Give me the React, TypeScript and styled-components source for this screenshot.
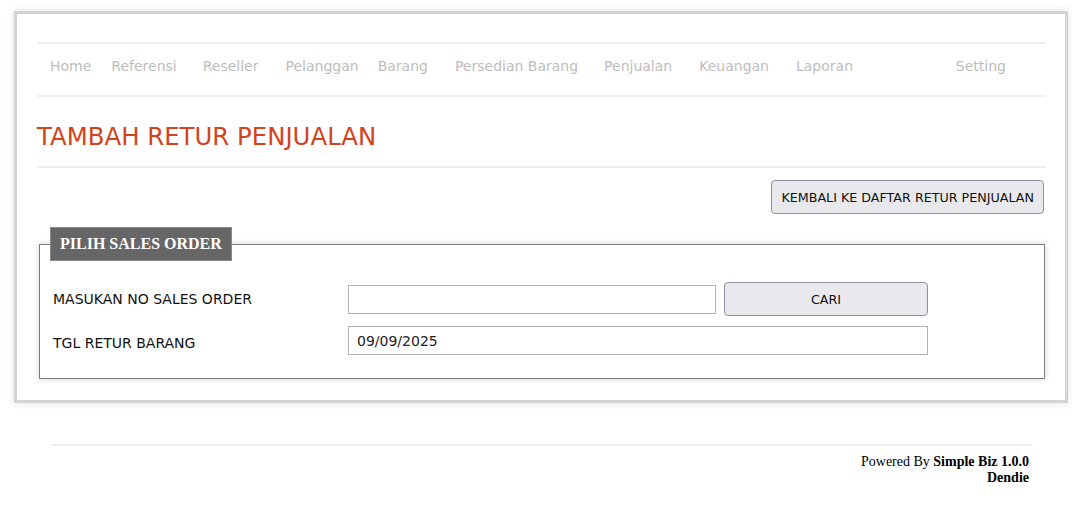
import React from "react";
import styled, { createGlobalStyle } from "styled-components";

const GlobalStyle = createGlobalStyle`
  html, body {
    margin: 0;
    padding: 0;
    background: #fff;
  }
  body {
    font-family: "DejaVu Sans", Verdana, sans-serif;
  }
`;

const Page = styled.div`
  padding: 11px 0 0 14px;
`;

const Card = styled.div`
  width: 1054px;
  box-sizing: border-box;
  border: 3px solid #d3d3d3;
  box-shadow: 0 0 8px rgba(0, 0, 0, 0.12);
  background: #fff;
  padding: 28px 19px 21px 20px;
`;

const Nav = styled.nav`
  display: flex;
  align-items: center;
  border-top: 2px solid #eeeeee;
  border-bottom: 2px solid #eeeeee;
  padding: 12px 30px 19px 3px;
`;

const NavItem = styled.a<{ $after: number; $push?: boolean }>`
  font-size: 14px;
  line-height: 20px;
  color: #bdbdbd;
  text-decoration: none;
  padding: 0 ${({ $after }) => $after}px 0 10px;
  margin-left: ${({ $push }) => ($push ? "auto" : "0")};
  white-space: nowrap;
`;

const Title = styled.h1`
  margin: 0;
  padding: 25px 0 14px;
  font-size: 24.4px;
  line-height: 30px;
  font-weight: normal;
  color: #d3431b;
  border-bottom: 2px solid #eeeeee;
`;

const ActionBar = styled.div`
  display: flex;
  justify-content: flex-end;
  margin-top: 12px;
  padding-right: 2px;
`;

const Button = styled.button<{ $wide?: boolean }>`
  height: 34px;
  box-sizing: border-box;
  padding: 0 9px;
  font-family: "DejaVu Sans", Verdana, sans-serif;
  font-size: 12.7px;
  color: #111;
  background: #e9e9ed;
  border: 1px solid #8f8f9d;
  border-radius: 4px;
  width: ${({ $wide }) => ($wide ? "100%" : "auto")};
`;

const Panel = styled.div`
  margin: 13px 1px 0 2px;
`;

const Legend = styled.div`
  position: relative;
  z-index: 1;
  width: fit-content;
  margin: 0 0 -17px 11px;
  height: 34px;
  box-sizing: border-box;
  padding: 0 9px;
  line-height: 32px;
  background: #666666;
  border: 1px solid #8a8a8a;
  color: #fff;
  font-family: "Liberation Serif", "Times New Roman", serif;
  font-weight: bold;
  font-size: 16px;
`;

const PanelBox = styled.div`
  border: 1px solid #7d7d7d;
  box-shadow: 0 0 6px rgba(0, 0, 0, 0.18);
  padding: 37px 13px 23px;
`;

const FormGrid = styled.div`
  display: grid;
  grid-template-columns: 287px 368px 204px;
  column-gap: 8px;
  row-gap: 10px;
  align-items: center;
`;

const Label = styled.label<{ $drop?: number }>`
  font-size: 14px;
  color: #111;
  padding-top: ${({ $drop }) => $drop ?? 0}px;
`;

const Input = styled.input<{ $span?: boolean }>`
  height: 29px;
  box-sizing: border-box;
  border: 1px solid #b3b3b3;
  border-radius: 0;
  padding: 0 8px;
  font-family: "DejaVu Sans", Verdana, sans-serif;
  font-size: 14px;
  color: #222;
  outline: none;
  grid-column: ${({ $span }) => ($span ? "2 / 4" : "auto")};
`;

const Footer = styled.footer`
  margin: 41px 0 0 38px;
  width: 979px;
  border-top: 2px solid #eeeeee;
  padding: 8px 2px 0 0;
  box-sizing: border-box;
  text-align: right;
  font-family: "Liberation Serif", "Times New Roman", serif;
  font-size: 14px;
  line-height: 16px;
  color: #000;
`;

const navItems: { label: string; after: number; push?: boolean }[] = [
  { label: "Home", after: 10 },
  { label: "Referensi", after: 16 },
  { label: "Reseller", after: 17 },
  { label: "Pelanggan", after: 9 },
  { label: "Barang", after: 17 },
  { label: "Persedian Barang", after: 16 },
  { label: "Penjualan", after: 17 },
  { label: "Keuangan", after: 17 },
  { label: "Laporan", after: 10 },
  { label: "Setting", after: 10, push: true },
];

export default function App() {
  return (
    <>
      <GlobalStyle />
      <Page>
        <Card>
          <Nav>
            {navItems.map((item) => (
              <NavItem
                key={item.label}
                href="#"
                $after={item.after}
                $push={item.push}
              >
                {item.label}
              </NavItem>
            ))}
          </Nav>
          <Title>TAMBAH RETUR PENJUALAN</Title>
          <ActionBar>
            <Button>KEMBALI KE DAFTAR RETUR PENJUALAN</Button>
          </ActionBar>
          <Panel>
            <Legend>PILIH SALES ORDER</Legend>
            <PanelBox>
              <FormGrid>
                <Label>MASUKAN NO SALES ORDER</Label>
                <Input type="text" />
                <Button $wide>CARI</Button>
                <Label $drop={4}>TGL RETUR BARANG</Label>
                <Input type="text" defaultValue="09/09/2025" $span />
              </FormGrid>
            </PanelBox>
          </Panel>
        </Card>
        <Footer>
          Powered By <b>Simple Biz 1.0.0</b>
          <br />
          <b>Dendie</b>
        </Footer>
      </Page>
    </>
  );
}
